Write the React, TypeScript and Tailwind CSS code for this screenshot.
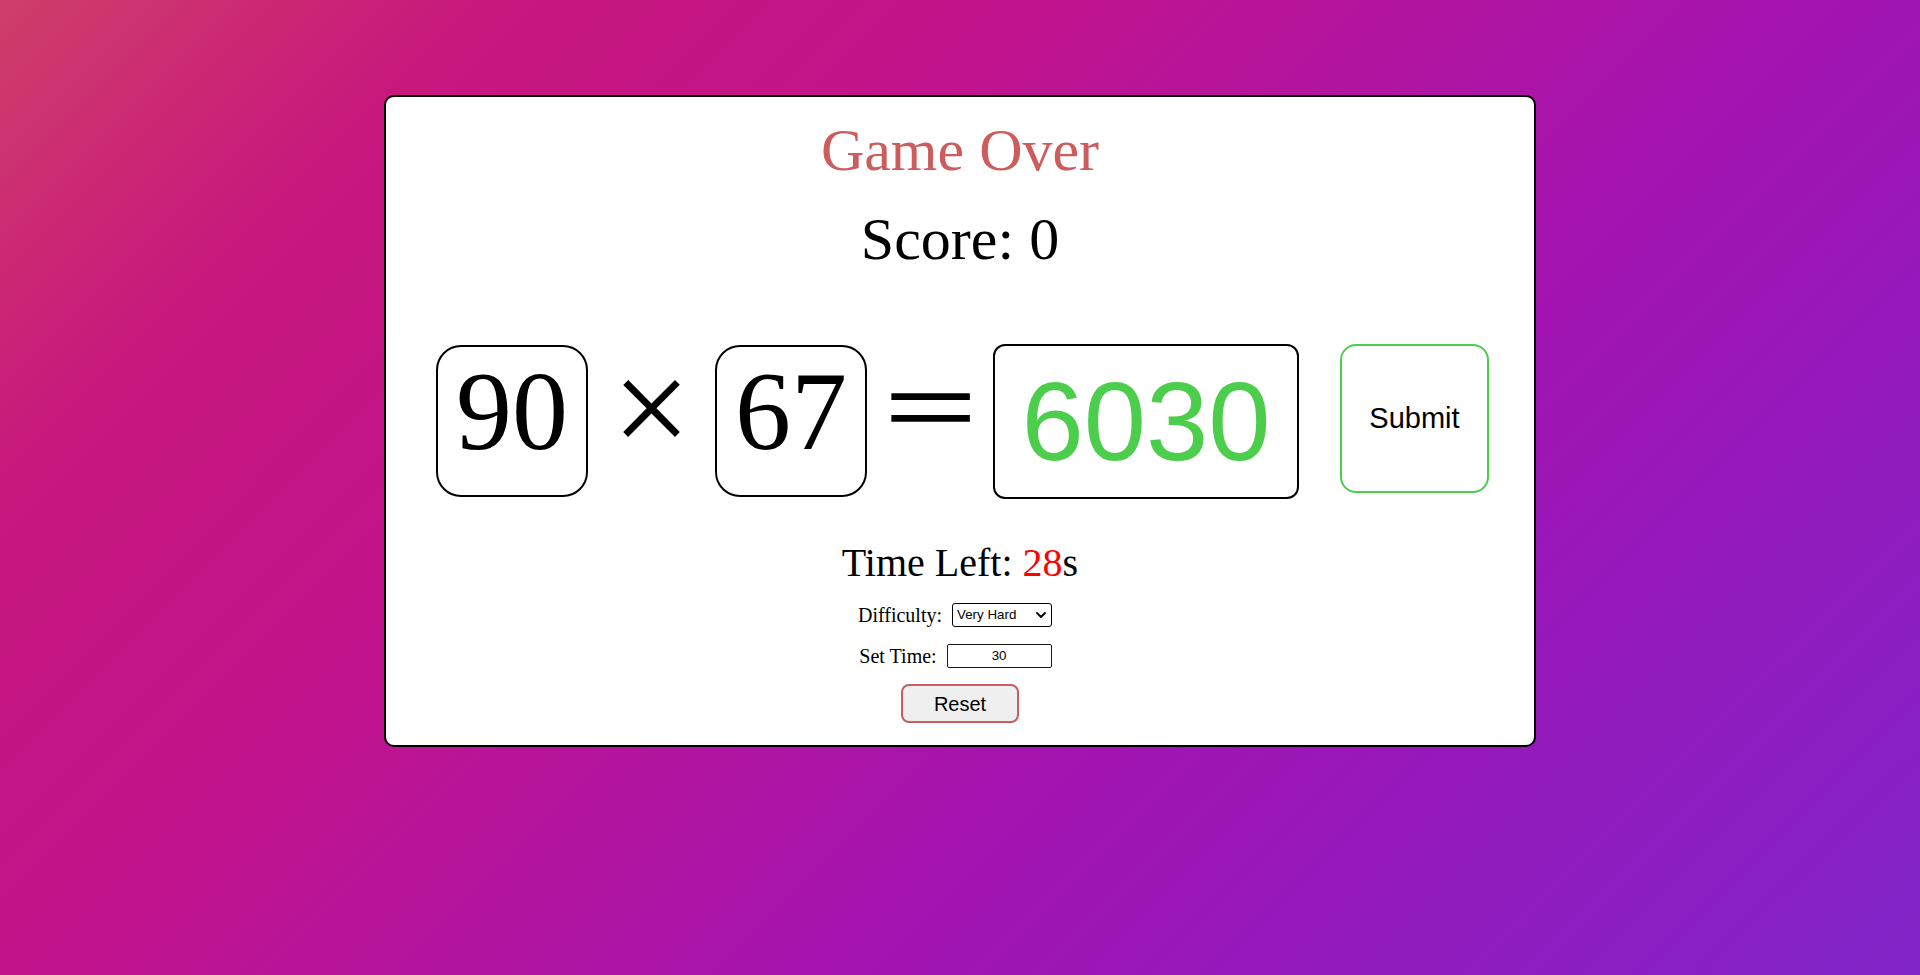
import React from "react";

export default function App() {
  return (
    <div className="min-h-screen w-full bg-[linear-gradient(135deg,#cf3f69_0%,#c8177d_17%,#c3148c_34%,#a014b4_66%,#8024c8_100%)] pt-[95px] pb-[10px]">
      <div className="mx-auto w-[1152px] border-2 border-black rounded-[10px] bg-white text-center text-black font-['Liberation_Serif','Times_New_Roman',serif] pt-[19px] pb-[22px]">
        <div className="text-[60px] leading-[69px] text-[#cd5c5c]">Game Over</div>
        <div className="mt-[20px] text-[60px] leading-[69px]">Score: 0</div>

        <div className="mt-[70px] flex justify-center items-start h-[155px] pl-[5px]">
          <div className="mt-[1px] w-[152px] h-[152px] border-2 border-black rounded-[25px] text-[112px] leading-[129px]">
            90
          </div>
          <div className="w-[127px] h-[152px] flex items-center justify-center text-[139px] leading-none">
            <span className="-translate-y-[12px]">×</span>
          </div>
          <div className="mt-[1px] w-[152px] h-[152px] border-2 border-black rounded-[25px] text-[112px] leading-[129px]">
            67
          </div>
          <div className="w-[126px] h-[155px] flex items-center justify-center text-[108px] leading-none">
            <span className="-translate-y-[15px] scale-x-[1.52] [-webkit-text-stroke:1.4px_black]">=</span>
          </div>
          <div className="w-[306px] h-[155px] border-2 border-black rounded-[12px] flex items-center justify-center font-['Liberation_Sans',Arial,sans-serif] text-[112px] leading-none text-[#4ccd4c]">
            6030
          </div>
          <button className="ml-[41px] w-[149px] h-[149px] border-2 border-[#4ccd4c] rounded-[16px] bg-white font-['Liberation_Sans',Arial,sans-serif] text-[29px] text-black">
            Submit
          </button>
        </div>

        <div className="mt-[41px] text-[40px] leading-[46px]">
          Time Left: <span className="text-[#ff0000]">28</span>s
        </div>

        <div className="mt-[17px] flex justify-center items-center gap-[10px] h-[24px] pr-[10px] text-[20px]">
          <span>Difficulty:</span>
          <div className="w-[100px] h-[24px] border border-black rounded-[3px] flex items-center justify-between pl-[4px] pr-[5px] font-['Liberation_Sans',Arial,sans-serif] text-[13.33px] bg-white">
            <span>Very Hard</span>
            <svg width="10" height="6" viewBox="0 0 10 6" fill="none">
              <path d="M1 1l4 4 4-4" stroke="#000" strokeWidth="1.8" strokeLinecap="round" strokeLinejoin="round" />
            </svg>
          </div>
        </div>

        <div className="mt-[17px] flex justify-center items-center gap-[10px] h-[24px] pr-[9px] text-[20px]">
          <span>Set Time:</span>
          <div className="w-[105px] h-[24px] border border-[#1a1a1a] rounded-[2px] flex items-center justify-center font-['Liberation_Sans',Arial,sans-serif] text-[13.33px]">
            30
          </div>
        </div>

        <div className="mt-[16px] flex justify-center">
          <button className="w-[118px] h-[39px] border-2 border-[#cd5c5c] rounded-[8px] bg-[#efefef] font-['Liberation_Sans',Arial,sans-serif] text-[20px] text-black">
            Reset
          </button>
        </div>
      </div>
    </div>
  );
}
